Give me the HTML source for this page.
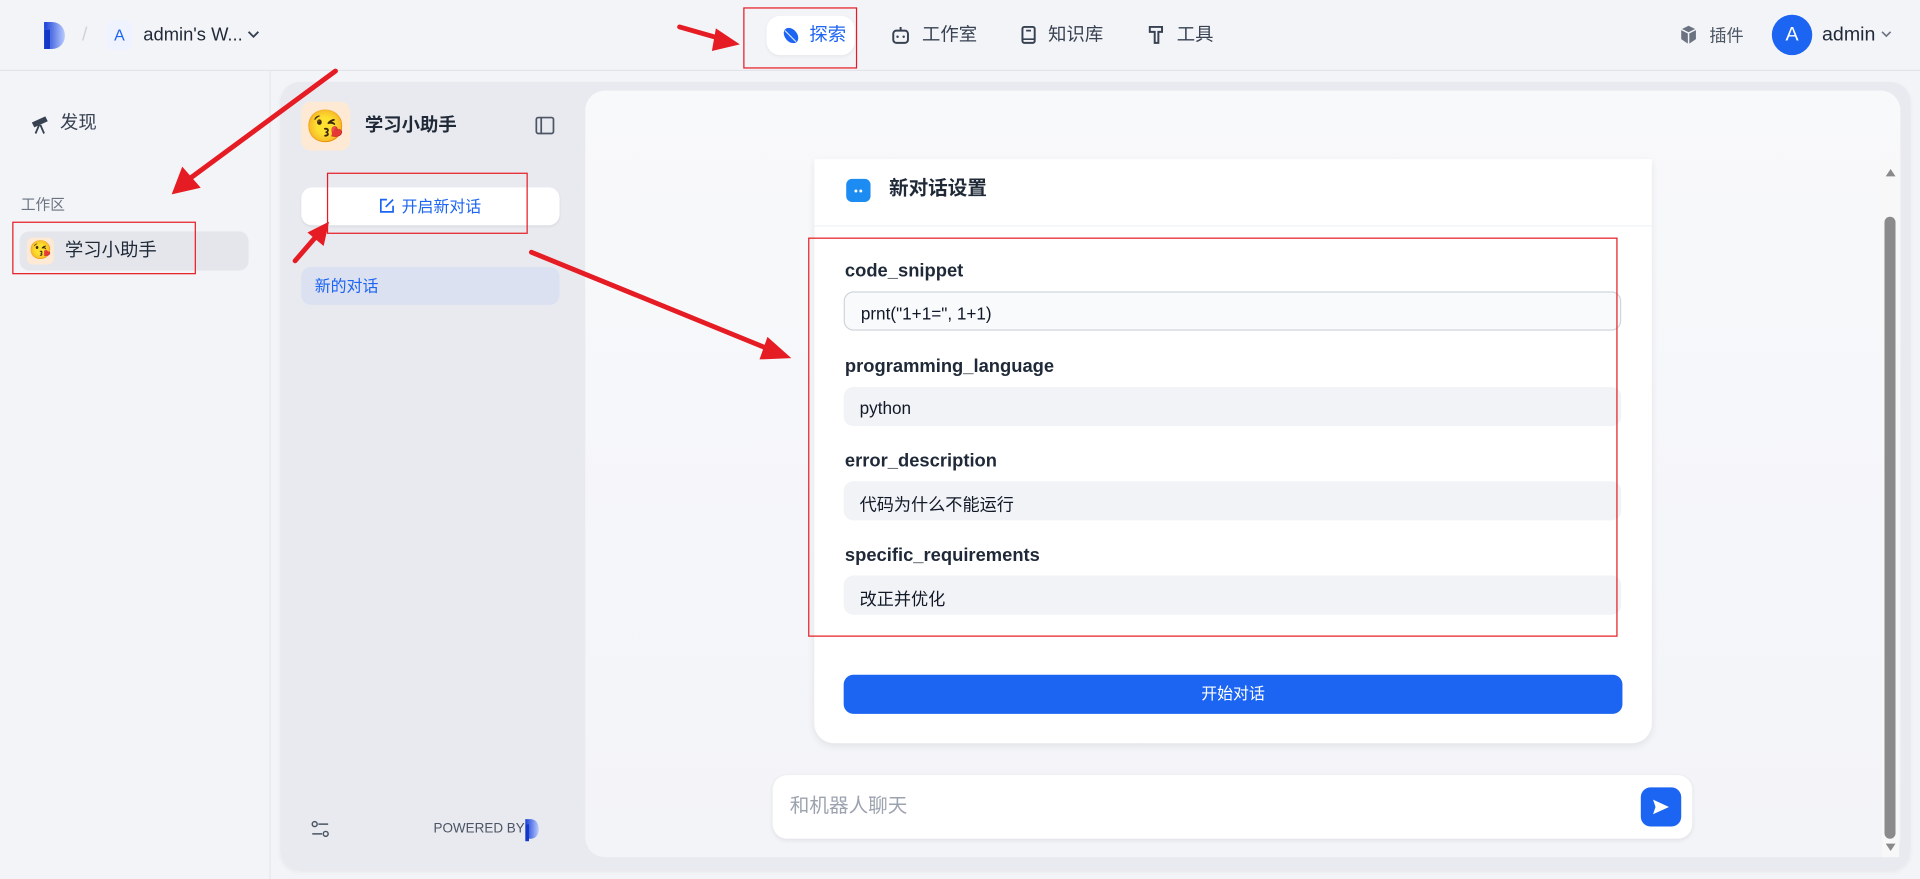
<!DOCTYPE html>
<html><head><meta charset="utf-8"><style>
*{box-sizing:border-box;margin:0;padding:0}
html,body{width:1920px;height:879px;overflow:hidden;background:#f3f4f8}
body{font-family:"Liberation Sans","Noto Sans CJK SC",sans-serif;color:#1f2937}
#w{position:absolute;left:0;top:0;width:1568px;height:718px;transform:scale(1.22449);transform-origin:0 0;background:#f3f4f8}
.a{position:absolute}
.t{position:absolute;white-space:nowrap;line-height:1}
.inp{position:absolute;left:689px;width:635px;height:32px;background:#f2f3f6;border-radius:8px;font-size:14px;padding:9px 13px;color:#111827}
.lab{position:absolute;left:690px;font-size:15px;font-weight:bold;color:#1f2937}
.rb{position:absolute;border:1.5px solid #e51c23}
</style></head><body><div id="w">
<!-- top bar -->
<div class="a" style="left:0;top:57px;width:1568px;height:1px;background:#e2e4ea"></div>
<svg class="a" style="left:34px;top:17px" width="20" height="24"><defs><linearGradient id="g" x1="0" x2="1"><stop offset="0" stop-color="#1a3fd6"/><stop offset="1" stop-color="#b9ccff"/></linearGradient></defs><path d="M2 1h6c7 0 11 5 11 11s-4 11-11 11H7V7H2z" fill="url(#g)"/><rect x="2" y="7" width="5" height="16" fill="#1337c7"/></svg>
<div class="t" style="left:67px;top:21px;color:#d0d3da;font-size:16px">/</div>
<div class="a" style="left:87px;top:17px;width:21px;height:24px;background:#eef3ff;border-radius:5px;color:#1c64f2;font-size:13px;text-align:center;line-height:24px">A</div>
<div class="t" style="left:117px;top:21px;font-size:15px;color:#1f2937">admin's W...</div>
<svg class="a" style="left:202px;top:24px" width="10" height="8"><path d="M1 2l4 4 4-4" stroke="#374151" stroke-width="1.5" fill="none"/></svg>
<div class="a" style="left:626px;top:13px;width:72px;height:32px;background:#fff;border-radius:11px;box-shadow:0 1px 3px rgba(0,0,0,.06)"></div>
<svg class="a" style="left:638px;top:21px" width="16" height="16"><ellipse cx="8" cy="8" rx="5" ry="7" transform="rotate(-40 8 8)" fill="#1c64f2"/><path d="M3 4l9 9" stroke="#cfe0ff" stroke-width="1"/></svg>
<div class="t" style="left:661px;top:21px;font-size:15px;color:#1c64f2">探索</div>
<svg class="a" style="left:727px;top:20px" width="17" height="17"><rect x="2.5" y="5" width="12" height="10" rx="2.5" fill="none" stroke="#374151" stroke-width="1.6"/><path d="M8.5 5V2" stroke="#374151" stroke-width="1.6"/><circle cx="6" cy="10" r="1" fill="#374151"/><circle cx="11" cy="10" r="1" fill="#374151"/></svg>
<div class="t" style="left:753px;top:21px;font-size:15px;color:#374151">工作室</div>
<svg class="a" style="left:832px;top:20px" width="16" height="17"><rect x="3" y="2" width="10" height="13" rx="1.5" fill="none" stroke="#374151" stroke-width="1.6"/><path d="M3 12h10M6 5h4" stroke="#374151" stroke-width="1.4"/></svg>
<div class="t" style="left:856px;top:21px;font-size:15px;color:#374151">知识库</div>
<svg class="a" style="left:936px;top:20px" width="16" height="17"><path d="M3 2h10v4H10v9H7V6H3z" fill="none" stroke="#374151" stroke-width="1.6"/></svg>
<div class="t" style="left:961px;top:21px;font-size:15px;color:#374151">工具</div>
<svg class="a" style="left:1371px;top:20px" width="16" height="17"><path d="M8 1l6 3v8l-6 4-6-4V4z" fill="#6b7280"/><path d="M2 4l6 3 6-3M8 7v9" stroke="#f3f4f8" stroke-width="1.2" fill="none"/></svg>
<div class="t" style="left:1396px;top:22px;font-size:14px;color:#4b5563">插件</div>
<div class="a" style="left:1447px;top:12px;width:33px;height:33px;border-radius:50%;background:#1c64f2;color:#fff;font-size:16px;text-align:center;line-height:33px">A</div>
<div class="t" style="left:1488px;top:21px;font-size:16px;color:#1f2937">admin</div>
<svg class="a" style="left:1536px;top:25px" width="9" height="7"><path d="M1 1l3.5 3.5L8 1" stroke="#6b7280" stroke-width="1.3" fill="none"/></svg>
<!-- left sidebar -->
<div class="a" style="left:220px;top:58px;width:1px;height:660px;background:#e5e7eb"></div>
<svg class="a" style="left:24px;top:92px" width="18" height="18"><path d="M2 8l11-5 2 4-11 5z" fill="#374151"/><path d="M8 10l-3 7M9 10l3 7" stroke="#374151" stroke-width="1.5"/></svg>
<div class="t" style="left:49px;top:93px;font-size:15px;color:#374151">发现</div>
<div class="t" style="left:17px;top:161px;font-size:12px;color:#6b7280">工作区</div>
<div class="a" style="left:16px;top:189px;width:187px;height:32px;background:#e4e6ec;border-radius:8px"></div>
<div class="a" style="left:22px;top:194px;width:22px;height:22px;background:#fde9d4;border-radius:5px;font-size:15px;line-height:22px;text-align:center">😘</div>
<div class="t" style="left:53px;top:197px;font-size:15px;color:#1f2937">学习小助手</div>
<!-- main panel -->
<div class="a" style="left:229px;top:67px;width:1331px;height:643px;background:#e9eaf0;border-radius:16px;box-shadow:0 2px 4px rgba(0,0,0,.05)"></div>
<div class="a" style="left:246px;top:83px;width:40px;height:40px;background:#fde9d4;border-radius:8px;font-size:26px;line-height:40px;text-align:center">😘</div>
<div class="t" style="left:298px;top:95px;font-size:15px;font-weight:bold;color:#1f2937">学习小助手</div>
<svg class="a" style="left:437px;top:95px" width="16" height="15"><rect x="1" y="1" width="14" height="13" rx="1.5" fill="none" stroke="#4b5563" stroke-width="1.4"/><path d="M5 1v13" stroke="#4b5563" stroke-width="1.4"/></svg>
<div class="a" style="left:246px;top:153px;width:211px;height:31px;background:#fff;border-radius:9px;box-shadow:0 1px 2px rgba(0,0,0,.06)"></div>
<svg class="a" style="left:309px;top:161px" width="14" height="14"><path d="M7 2H2v10h10V7" fill="none" stroke="#1c64f2" stroke-width="1.4"/><path d="M6 8l6-6" stroke="#1c64f2" stroke-width="1.4"/></svg>
<div class="t" style="left:328px;top:162px;font-size:13px;color:#1c64f2">开启新对话</div>
<div class="a" style="left:246px;top:218px;width:211px;height:31px;background:#dbe1f0;border-radius:8px"></div>
<div class="t" style="left:257px;top:227px;font-size:13px;color:#1c64f2">新的对话</div>
<svg class="a" style="left:254px;top:670px" width="16" height="14"><circle cx="3" cy="3" r="2" fill="none" stroke="#4b5563" stroke-width="1.2"/><path d="M6 3h8M1 11h8" stroke="#4b5563" stroke-width="1.2"/><circle cx="12" cy="11" r="2" fill="none" stroke="#4b5563" stroke-width="1.2"/></svg>
<div class="t" style="left:354px;top:672px;font-size:11px;color:#4b5563">POWERED BY</div>
<svg class="a" style="left:427px;top:668px" width="14" height="20"><path d="M2 1h4c5 0 7 4 7 8s-2 8-7 8H5V5H2z" fill="url(#g)"/><rect x="2" y="5" width="3" height="14" fill="#1337c7"/></svg>
<!-- chat area -->
<div class="a" style="left:478px;top:74px;width:1074px;height:626px;background:linear-gradient(#f8f9fb,#f3f4f8);border-radius:16px"></div>
<div class="a" style="left:665px;top:130px;width:684px;height:477px;background:#fff;border-radius:0 0 16px 16px;box-shadow:0 2px 6px rgba(0,0,0,.08)"></div>
<div class="a" style="left:665px;top:184px;width:684px;height:1px;background:#f0f1f4"></div>
<svg class="a" style="left:691px;top:146px" width="20" height="19"><rect x="0" y="0" width="20" height="19" rx="5" fill="#1c8cf2"/><circle cx="8" cy="10" r="1.2" fill="#fff"/><circle cx="12" cy="10" r="1.2" fill="#fff"/></svg>
<div class="t" style="left:726px;top:147px;font-size:16px;font-weight:bold;color:#1f2937">新对话设置</div>
<div class="lab" style="top:213px">code_snippet</div>
<div class="inp" style="top:238px;background:#f9fafb;border:1px solid #d1d5db">prnt("1+1=", 1+1)</div>
<div class="lab" style="top:291px">programming_language</div>
<div class="inp" style="top:316px">python</div>
<div class="lab" style="top:368px">error_description</div>
<div class="inp" style="top:393px">代码为什么不能运行</div>
<div class="lab" style="top:445px">specific_requirements</div>
<div class="inp" style="top:470px">改正并优化</div>
<div class="a" style="left:689px;top:551px;width:636px;height:32px;background:#1c64f2;border-radius:8px;color:#fff;font-size:13px;text-align:center;line-height:32px">开始对话</div>
<div class="a" style="left:631px;top:633px;width:751px;height:52px;background:#fff;border-radius:12px;box-shadow:0 1px 4px rgba(0,0,0,.08)"></div>
<div class="t" style="left:645px;top:651px;font-size:16px;color:#9ca3af">和机器人聊天</div>
<div class="a" style="left:1340px;top:643px;width:33px;height:32px;background:#1c64f2;border-radius:8px"></div>
<svg class="a" style="left:1348px;top:651px" width="17" height="16"><path d="M2 2l13 6-13 6 2-6z" fill="#fff"/></svg>
<!-- scrollbar -->
<div class="a" style="left:1537px;top:130px;width:14px;height:570px;background:#f8f8f9"></div>
<svg class="a" style="left:1539px;top:137px" width="10" height="8"><path d="M1 7l4-6 4 6z" fill="#8a8a8a"/></svg>
<div class="a" style="left:1539px;top:177px;width:9px;height:508px;background:#8b8b8b;border-radius:5px"></div>
<svg class="a" style="left:1539px;top:688px" width="10" height="8"><path d="M1 1l4 6 4-6z" fill="#8a8a8a"/></svg>
<!-- annotations -->
<div class="rb" style="left:607px;top:6px;width:93px;height:50px"></div>
<div class="rb" style="left:10px;top:181px;width:150px;height:43px"></div>
<div class="rb" style="left:267px;top:141px;width:164px;height:50px"></div>
<div class="rb" style="left:660px;top:194px;width:661px;height:326px"></div>
<svg class="a" style="left:0;top:0" width="1568" height="718">
<g stroke="#e51c23" stroke-width="4" fill="#e51c23" stroke-linecap="round">
<line x1="274" y1="58" x2="152" y2="148"/><polygon points="141,158 149,137 163,153" stroke-width="1"/>
<line x1="555" y1="22" x2="590" y2="32"/><polygon points="603,36 585,24 582,41" stroke-width="1"/>
<line x1="241" y1="213" x2="260" y2="191"/><polygon points="268,182 252,190 264,200" stroke-width="1"/>
<line x1="434" y1="206" x2="630" y2="286"/><polygon points="645,292 627,276 621,293" stroke-width="1"/>
</g></svg>
</div></body></html>
